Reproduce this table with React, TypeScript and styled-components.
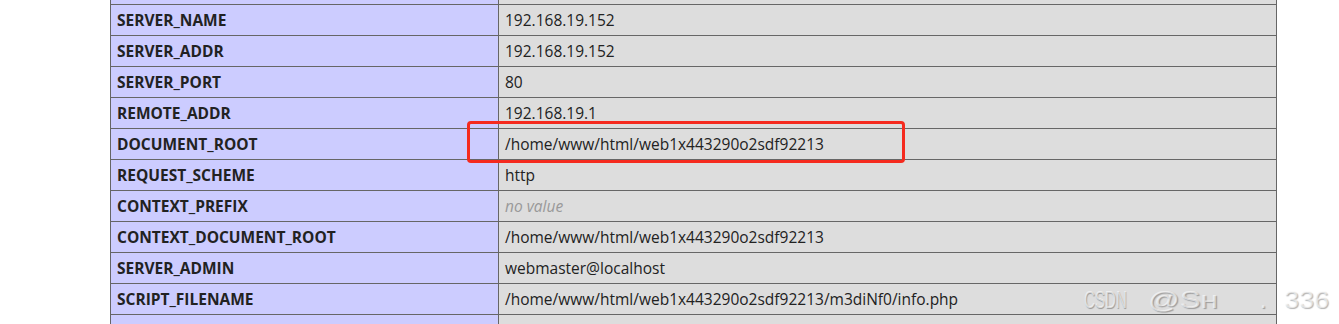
import styled, { createGlobalStyle } from 'styled-components';

const Global = createGlobalStyle`
  html, body {
    margin: 0;
    padding: 0;
    background: #fff;
    overflow: hidden;
  }
  body {
    font-family: "Open Sans", "Noto Sans", "Noto Sans CJK SC", sans-serif;
    color: #222;
  }
`

const Page = styled.div`
  position: relative;
  height: 324px;
  overflow: hidden;
`

const Table = styled.table`
  border-collapse: collapse;
  width: 1167px;
  margin: -27px 0 0 110px;
  table-layout: fixed;
`

const Cell = styled.td`
  border: 1px solid #666;
  padding: 5px 6px;
  font-size: 15.5px;
  line-height: 20px;
  height: 20px;
  vertical-align: baseline;
  white-space: nowrap;
  overflow: hidden;
`

const Key = styled(Cell)`
  width: 375px;
  background: #ccf;
  font-weight: 700;
  color: #222;
`

const Value = styled(Cell)`
  background: #ddd;
  color: #222;
`

const Empty = styled.i`
  color: #999;
`

// red annotation box drawn over the table
const Highlight = styled.div`
  position: absolute;
  left: 467px;
  top: 121px;
  width: 432px;
  height: 36px;
  border: 3.5px solid #f52a1e;
  border-radius: 4px;
  pointer-events: none;
`

const Watermark = styled.div`
  position: absolute;
  left: 1084px;
  top: 286px;
  display: flex;
  align-items: baseline;
  font-family: "Liberation Sans", Arial, sans-serif;
  font-size: 24px;
  color: rgba(255, 255, 255, 0.6);
  text-shadow: 1px 1px 1px rgba(0, 0, 0, 0.3);
  white-space: nowrap;
  pointer-events: none;
`

const Mark = styled.span<{ $squeeze?: number; $before?: number; $after?: number }>`
  display: inline-block;
  transform: scaleX(${p => p.$squeeze ?? 1});
  transform-origin: left center;
  margin-left: ${p => p.$before ?? 0}px;
  margin-right: ${p => p.$after ?? 0}px;
`

type Row = { k: string; v?: string; hidden?: boolean }

// first and last rows are only partly scrolled into view
const rows: Row[] = [
    { k: 'SERVER_SOFTWARE', v: '', hidden: true },
    { k: 'SERVER_NAME', v: '192.168.19.152' },
    { k: 'SERVER_ADDR', v: '192.168.19.152' },
    { k: 'SERVER_PORT', v: '80' },
    { k: 'REMOTE_ADDR', v: '192.168.19.1' },
    { k: 'DOCUMENT_ROOT', v: '/home/www/html/web1x443290o2sdf92213' },
    { k: 'REQUEST_SCHEME', v: 'http' },
    { k: 'CONTEXT_PREFIX' },
    { k: 'CONTEXT_DOCUMENT_ROOT', v: '/home/www/html/web1x443290o2sdf92213' },
    { k: 'SERVER_ADMIN', v: 'webmaster@localhost' },
    { k: 'SCRIPT_FILENAME', v: '/home/www/html/web1x443290o2sdf92213/m3diNf0/info.php' },
    { k: 'REMOTE_PORT', v: '', hidden: true },
]

export default function App() {
    return (
        <Page>
            <Global />
            <Table>
                <tbody>
                    {rows.map(r => (
                        <tr key={r.k}>
                            <Key>{r.hidden ? '\u00a0' : r.k}</Key>
                            <Value>{r.hidden ? '\u00a0' : r.v ?? <Empty>no value</Empty>}</Value>
                        </tr>
                    ))}
                </tbody>
            </Table>
            <Highlight />
            <Watermark>
                <Mark $squeeze={0.63} $after={-4}>CSDN</Mark>
                <Mark $squeeze={1.3}>@Sʜ</Mark>
                <Mark $before={58} $after={18}>.</Mark>
                <Mark $squeeze={1.12}>336</Mark>
            </Watermark>
        </Page>
    )
}
